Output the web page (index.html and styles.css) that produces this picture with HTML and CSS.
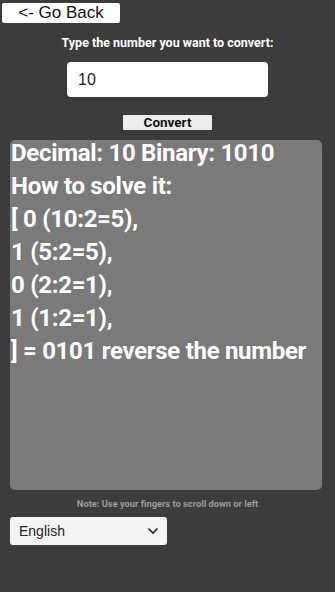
FILE: index.html
```html
<!DOCTYPE html>
<html lang="en">
<head>
    <meta charset="UTF-8">
    <meta name="viewport" content="width=device-width, initial-scale=1.0">
    <title>Binary Converter</title>
    <link rel="stylesheet" href="styles.css">
</head>
<body>
    <div class="page">
        <div class="top">
            <button class="back">&lt;- Go Back</button>
        </div>

        <p class="label">Type the number you want to convert:</p>
        <input class="number" type="text" value="10">
        <button class="convert">Convert</button>

        <!-- result box -->
        <div class="result">
            <div class="steps">
                Decimal: 10 Binary: 1010<br>
                How to solve it:<br>
                [ 0 (10:2=5),<br>
                1 (5:2=5),<br>
                0 (2:2=1),<br>
                1 (1:2=1),<br>
                ] = 0101 reverse the number
            </div>
        </div>

        <p class="note">Note: Use your fingers to scroll down or left</p>

        <div class="lang">
            <span>English</span>
            <svg width="12" height="8" viewBox="0 0 12 8"><path d="M1.5 1.5 L6 6 L10.5 1.5" fill="none" stroke="#222" stroke-width="1.6"/></svg>
        </div>
    </div>
</body>
</html>
```

FILE: styles.css
```css
* {
    box-sizing: border-box;
    margin: 0;
    padding: 0;
}
body {
    background-color: #3c3c3c;
    font-family: "Liberation Sans", Arial, sans-serif;
    width: 335px;
    height: 592px;
    overflow: hidden;
}
.page {
    display: flex;
    flex-direction: column;
    align-items: center;
}
.top {
    width: 100%;
    padding: 3px 0 0 2px;
}
.back {
    display: block;
    width: 118px;
    height: 20px;
    background: #fff;
    border: none;
    border-radius: 2px;
    font-family: "Liberation Sans", Arial, sans-serif;
    font-size: 17px;
    line-height: 20px;
    color: #111;
}
.label {
    margin-top: 12px;
    color: #fff;
    font-family: Roboto, sans-serif;
    font-weight: bold;
    font-size: 12.5px;
    line-height: 15px;
}
.number {
    margin-top: 12px;
    width: 201px;
    height: 35px;
    border: none;
    border-radius: 4px;
    background: #fff;
    padding-left: 11px;
    font-family: "Liberation Sans", Arial, sans-serif;
    font-size: 16px;
    color: #222;
    outline: none;
}
.convert {
    margin-top: 18px;
    width: 89px;
    height: 15px;
    border: none;
    border-radius: 1px;
    background: #ededed;
    font-family: Roboto, sans-serif;
    font-weight: bold;
    font-size: 13.5px;
    line-height: 15px;
    color: #111;
}
.result {
    margin-top: 10px;
    align-self: flex-start;
    margin-left: 10px;
    width: 312px;
    height: 350px;
    background: #7a7a7a;
    border-radius: 5px;
    padding-left: 1px;
    overflow: hidden;
}
.steps {
    margin-top: -3px;
    color: #fff;
    font-family: Roboto, sans-serif;
    font-weight: bold;
    font-size: 24px;
    line-height: 33px;
    letter-spacing: -0.3px;
}
.note {
    margin-top: 8px;
    color: #9a9a9a;
    font-family: Roboto, sans-serif;
    font-weight: bold;
    font-size: 9.3px;
    line-height: 11px;
}
.lang {
    align-self: flex-start;
    margin: 8px 0 0 10px;
    width: 157px;
    height: 28px;
    background: #f4f4f4;
    border-radius: 3px;
    display: flex;
    align-items: center;
    justify-content: space-between;
    padding: 0 8px 0 9px;
    font-family: "Liberation Sans", Arial, sans-serif;
    font-size: 14px;
    color: #222;
}
```
